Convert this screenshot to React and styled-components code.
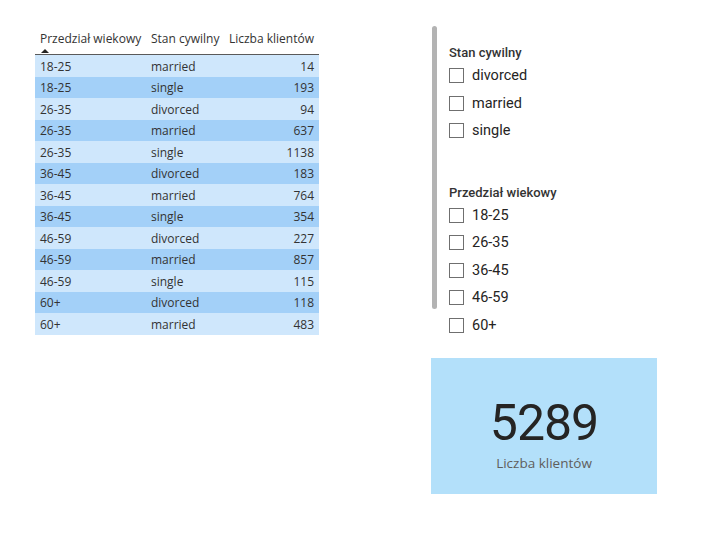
import React from "react";
import styled, { createGlobalStyle } from "styled-components";

const GlobalStyle = createGlobalStyle`
  html, body {
    margin: 0;
    padding: 0;
    background: #ffffff;
  }
`;

const rows = [
  ["18-25", "married", 14],
  ["18-25", "single", 193],
  ["26-35", "divorced", 94],
  ["26-35", "married", 637],
  ["26-35", "single", 1138],
  ["36-45", "divorced", 183],
  ["36-45", "married", 764],
  ["36-45", "single", 354],
  ["46-59", "divorced", 227],
  ["46-59", "married", 857],
  ["46-59", "single", 115],
  ["60+", "divorced", 118],
  ["60+", "married", 483],
];

const StyledPage = styled.div`
  display: flex;
  align-items: flex-start;
  width: 708px;
  height: 551px;
`;

const StyledTable = styled.div`
  display: flex;
  flex-direction: column;
  margin: 28px 0 0 35px;
  width: 284px;
  font-family: "Open Sans", "Noto Sans", sans-serif;
  font-size: 12px;
  color: #333333;
`;

const StyledHeaderRow = styled.div`
  display: grid;
  grid-template-columns: 111px 76px 97px;
  height: 27px;
  border-bottom: 1px solid #5a5a5a;
  box-sizing: border-box;
`;

const StyledHeaderCell = styled.div`
  display: flex;
  flex-direction: column;
  align-items: ${(p) => (p.$right ? "flex-end" : "flex-start")};
  padding: 3px 5px 0;
  line-height: 16px;
  white-space: nowrap;
`;

const StyledSortArrow = styled.div`
  width: 0;
  height: 0;
  margin: 2px 0 0 1px;
  border-left: 4px solid transparent;
  border-right: 4px solid transparent;
  border-bottom: 4px solid #252423;
`;

const StyledRow = styled.div`
  display: grid;
  grid-template-columns: 111px 76px 97px;
  height: 21.5px;
  align-items: center;
  background: ${(p) => (p.$dark ? "#a3d0f8" : "#cfe7fc")};
`;

const StyledCell = styled.div`
  padding: 1px 5px 0;
  text-align: ${(p) => (p.$right ? "right" : "left")};
  white-space: nowrap;
`;

const StyledRightColumn = styled.div`
  display: flex;
  flex-direction: column;
  margin: 26px 0 0 112px;
  width: 226px;
`;

const StyledSlicer = styled.div`
  display: flex;
  height: 332px;
`;

const StyledScrollbar = styled.div`
  width: 5px;
  height: 283px;
  margin-left: 1px;
  border-radius: 3px;
  background: #b3b3b3;
`;

const StyledSlicerContent = styled.div`
  display: flex;
  flex-direction: column;
  padding: 18px 0 0 12px;
  gap: 39px;
  font-family: Roboto, "DejaVu Sans", sans-serif;
  color: #252423;
`;

const StyledGroup = styled.div`
  display: flex;
  flex-direction: column;
`;

const StyledGroupTitle = styled.div`
  height: 18px;
  line-height: 18px;
  font-size: 13px;
  font-weight: 500;
  color: #333333;
`;

const StyledItem = styled.label`
  display: flex;
  align-items: center;
  gap: 8px;
  height: 27.5px;
  font-size: 14.5px;
`;

const StyledBox = styled.span`
  width: 15px;
  height: 15px;
  box-sizing: border-box;
  border: 1px solid #6f6f6f;
  background: #ffffff;
`;

const StyledCard = styled.div`
  display: flex;
  flex-direction: column;
  align-items: center;
  height: 136px;
  background: #b3e0fa;
`;

const StyledCardValue = styled.div`
  margin-top: 40px;
  font-family: Roboto, "DejaVu Sans", sans-serif;
  font-size: 50px;
  line-height: 50px;
  letter-spacing: -1px;
  color: #252423;
`;

const StyledCardLabel = styled.div`
  margin-top: 6px;
  font-family: "Open Sans", "Noto Sans", sans-serif;
  font-size: 13.5px;
  line-height: 18px;
  color: #605e5c;
`;

function Slicer({ title, items }) {
  return (
    <StyledGroup>
      <StyledGroupTitle>{title}</StyledGroupTitle>
      {items.map((item) => (
        <StyledItem key={item}>
          <StyledBox />
          {item}
        </StyledItem>
      ))}
    </StyledGroup>
  );
}

export default function App() {
  return (
    <StyledPage>
      <GlobalStyle />
      <StyledTable>
        <StyledHeaderRow>
          <StyledHeaderCell>
            Przedział wiekowy
            <StyledSortArrow />
          </StyledHeaderCell>
          <StyledHeaderCell>Stan cywilny</StyledHeaderCell>
          <StyledHeaderCell $right>Liczba klientów</StyledHeaderCell>
        </StyledHeaderRow>
        {rows.map(([age, status, count], i) => (
          <StyledRow key={i} $dark={i % 2 === 1}>
            <StyledCell>{age}</StyledCell>
            <StyledCell>{status}</StyledCell>
            <StyledCell $right>{count}</StyledCell>
          </StyledRow>
        ))}
      </StyledTable>
      <StyledRightColumn>
        <StyledSlicer>
          <StyledScrollbar />
          <StyledSlicerContent>
            <Slicer title="Stan cywilny" items={["divorced", "married", "single"]} />
            <Slicer
              title="Przedział wiekowy"
              items={["18-25", "26-35", "36-45", "46-59", "60+"]}
            />
          </StyledSlicerContent>
        </StyledSlicer>
        <StyledCard>
          <StyledCardValue>5289</StyledCardValue>
          <StyledCardLabel>Liczba klientów</StyledCardLabel>
        </StyledCard>
      </StyledRightColumn>
    </StyledPage>
  );
}
